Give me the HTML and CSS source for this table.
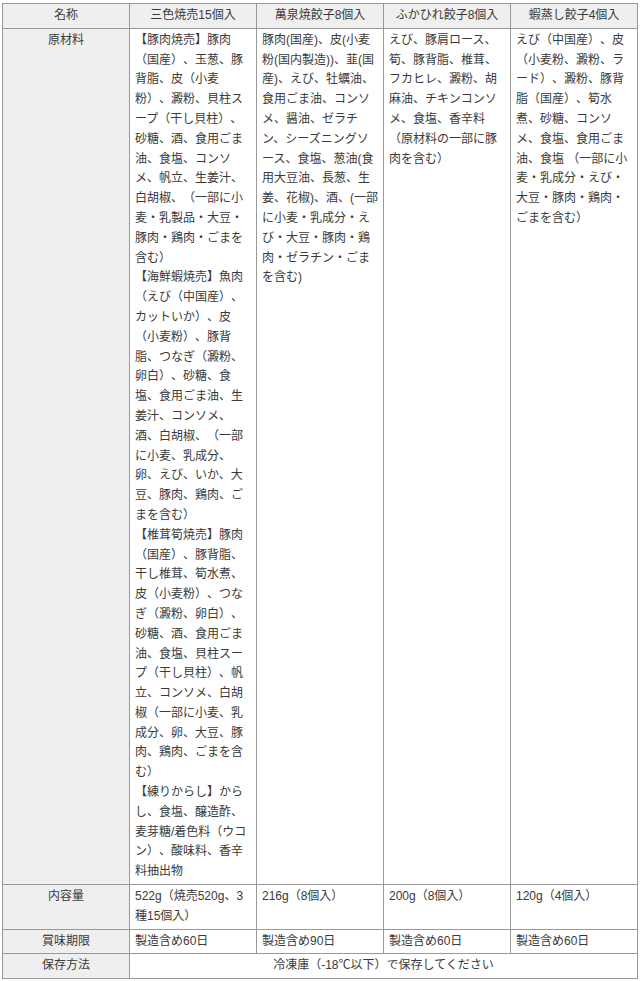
FILE: index.html
```html
<!DOCTYPE html>
<html lang="ja">
<head>
<meta charset="utf-8">
<title>商品情報</title>
<link rel="stylesheet" href="styles.css">
</head>
<body>
<table class="spec">
  <thead>
    <tr>
      <th class="label">名称</th>
      <th>三色焼売15個入</th>
      <th>萬泉焼餃子8個入</th>
      <th>ふかひれ餃子8個入</th>
      <th>蝦蒸し餃子4個入</th>
    </tr>
  </thead>
  <tbody>
    <tr>
      <th class="label">原材料</th>
      <td>【豚肉焼売】豚肉<br>（国産）、玉葱、豚<br>背脂、皮（小麦<br>粉）、澱粉、貝柱ス<br>ープ（干し貝柱）、<br>砂糖、酒、食用ごま<br>油、食塩、コンソ<br>メ、帆立、生姜汁、<br>白胡椒、（一部に小<br>麦・乳製品・大豆・<br>豚肉・鶏肉・ごまを<br>含む）<br>【海鮮蝦焼売】魚肉<br>（えび（中国産）、<br>カットいか）、皮<br>（小麦粉）、豚背<br>脂、つなぎ（澱粉、<br>卵白）、砂糖、食<br>塩、食用ごま油、生<br>姜汁、コンソメ、<br>酒、白胡椒、（一部<br>に小麦、乳成分、<br>卵、えび、いか、大<br>豆、豚肉、鶏肉、ご<br>まを含む）<br>【椎茸筍焼売】豚肉<br>（国産）、豚背脂、<br>干し椎茸、筍水煮、<br>皮（小麦粉）、つな<br>ぎ（澱粉、卵白）、<br>砂糖、酒、食用ごま<br>油、食塩、貝柱スー<br>プ（干し貝柱）、帆<br>立、コンソメ、白胡<br>椒（一部に小麦、乳<br>成分、卵、大豆、豚<br>肉、鶏肉、ごまを含<br>む）<br>【練りからし】から<br>し、食塩、醸造酢、<br>麦芽糖/着色料（ウコ<br>ン）、酸味料、香辛<br>料抽出物</td>
      <td>豚肉(国産)、皮(小麦<br>粉(国内製造))、韮(国<br>産)、えび、牡蠣油、<br>食用ごま油、コンソ<br>メ、醤油、ゼラチ<br>ン、シーズニングソ<br>ース、食塩、葱油(食<br>用大豆油、長葱、生<br>姜、花椒)、酒、(一部<br>に小麦・乳成分・え<br>び・大豆・豚肉・鶏<br>肉・ゼラチン・ごま<br>を含む)</td>
      <td>えび、豚肩ロース、<br>筍、豚背脂、椎茸、<br>フカヒレ、澱粉、胡<br>麻油、チキンコンソ<br>メ、食塩、香辛料<br>（原材料の一部に豚<br>肉を含む）</td>
      <td>えび（中国産）、皮<br>（小麦粉、澱粉、ラ<br>ード）、澱粉、豚背<br>脂（国産）、筍水<br>煮、砂糖、コンソ<br>メ、食塩、食用ごま<br>油、食塩 （一部に小<br>麦・乳成分・えび・<br>大豆・豚肉・鶏肉・<br>ごまを含む）</td>
    </tr>
    <tr>
      <th class="label">内容量</th>
      <td>522g（焼売520g、3<br>種15個入）</td>
      <td>216g（8個入）</td>
      <td>200g（8個入）</td>
      <td>120g（4個入）</td>
    </tr>
    <tr>
      <th class="label">賞味期限</th>
      <td>製造含め60日</td>
      <td>製造含め90日</td>
      <td>製造含め60日</td>
      <td>製造含め60日</td>
    </tr>
    <tr>
      <th class="label">保存方法</th>
      <td class="span" colspan="4">冷凍庫（-18℃以下）で保存してください</td>
    </tr>
  </tbody>
</table>
</body>
</html>
```

FILE: styles.css
```css
html, body {
  margin: 0;
  padding: 0;
  background: #fff;
}

body {
  padding: 3px 2px 0;
  font-family: "Liberation Sans", "Noto Sans CJK JP", sans-serif;
  font-size: 12px;
  line-height: 1.65;
  color: #3a3a3a;
  text-spacing-trim: space-all;
}

.spec {
  width: 636px;
  table-layout: fixed;
  border-collapse: collapse;
  border: 1px solid #999;
}

.spec th,
.spec td {
  border: 1px solid #999;
  padding: 2px 5px;
  vertical-align: top;
  font-weight: normal;
  text-align: left;
}

.spec thead th {
  background: #efefef;
  text-align: center;
}

.spec th.label {
  background: #efefef;
  text-align: center;
}

.spec td.span {
  text-align: center;
}
```
